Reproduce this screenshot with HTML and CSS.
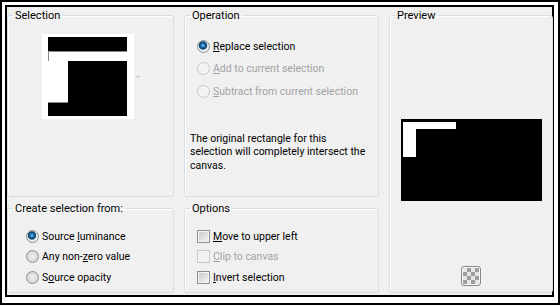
FILE: index.html
```html
<!DOCTYPE html>
<html lang="en">
    <head>
        <meta charset="UTF-8">
        <meta name="viewport" content="width=device-width, initial-scale=1.0">
        <title>Selection From Mask</title>
        <link rel="stylesheet" href="styles.css">
    </head>
    <body>
        <div class="frame">
            <div class="dialog">
                <fieldset class="group selection">
                    <legend>Selection</legend>
                    <div class="thumb-row">
                        <svg class="thumb" width="92" height="85" viewBox="0 0 92 85">
                            <rect x="0" y="0" width="92" height="85" fill="#fff"/>
                            <rect x="6" y="3" width="79" height="79" fill="#000"/>
                            <rect x="6" y="17" width="79" height="10" fill="#fff"/>
                            <rect x="6" y="27" width="20" height="42" fill="#fff"/>
                            <path d="M6.5 27V17.5H85" stroke="#8a8a8a" fill="none"/>
                            <path d="M6 68.5H26" stroke="#8a8a8a"/>
                        </svg>
                        <span class="drop"></span>
                    </div>
                </fieldset>

                <fieldset class="group operation">
                    <legend>Operation</legend>
                    <label class="opt"><span class="radio on"></span><span><u>R</u>eplace selection</span></label>
                    <label class="opt off"><span class="radio"></span><span><u>A</u>dd to current selection</span></label>
                    <label class="opt off"><span class="radio"></span><span><u>S</u>ubtract from current selection</span></label>
                    <p class="note">The original rectangle for this selection will completely intersect the canvas.</p>
                </fieldset>

                <fieldset class="group preview">
                    <legend>Preview</legend>
                    <svg class="preview-img" width="141" height="82" viewBox="0 0 141 82">
                        <rect x="0" y="0" width="141" height="82" fill="#000"/>
                        <rect x="2" y="3" width="53" height="7" fill="#fff"/>
                        <rect x="2" y="3" width="13" height="35" fill="#fff"/>
                    </svg>
                    <button class="checker" title="Transparency"></button>
                </fieldset>

                <fieldset class="group source">
                    <legend>Create selection from:</legend>
                    <label class="opt"><span class="radio on"></span><span>Source <u>l</u>uminance</span></label>
                    <label class="opt"><span class="radio"></span><span>Any non-<u>z</u>ero value</span></label>
                    <label class="opt"><span class="radio"></span><span>S<u>o</u>urce opacity</span></label>
                </fieldset>

                <fieldset class="group options">
                    <legend>Options</legend>
                    <label class="opt"><span class="check"></span><span><u>M</u>ove to upper left</span></label>
                    <label class="opt off"><span class="check"></span><span><u>C</u>lip to canvas</span></label>
                    <label class="opt"><span class="check"></span><span><u>I</u>nvert selection</span></label>
                </fieldset>
            </div>
        </div>
    </body>
</html>
```

FILE: styles.css
```css
body {
    margin: 0;
    background-color: #fff;
    font-family: "Segoe UI", Roboto, sans-serif;
    font-size: 10.5px;
    color: #000;
}
.frame {
    width: 560px;
    height: 305px;
    box-sizing: border-box;
    border: 2px solid #000;
    padding: 3px 4px 6px 3px;
}
.dialog {
    height: 100%;
    box-sizing: border-box;
    border: 2px solid #000;
    background-color: #f0f0f0;
    padding: 1px 0 0 0;
    display: grid;
    grid-template-columns: 167px 195px 164px;
    grid-template-rows: 189px 92px;
    column-gap: 10px;
    row-gap: 4px;
}
.group {
    margin: 0;
    padding: 0;
    min-width: 0;
    border: 1px solid #d5dfe5;
    border-radius: 3px;
    box-shadow: inset 1px 1px 0 #fff;
}
.group legend {
    margin-left: 5px;
    padding: 0 2px;
    line-height: 15px;
    font-size: 11px;
}
.preview {
    grid-column: 3;
    grid-row: 1 / span 2;
}
.selection {
    grid-column: 1;
    grid-row: 1;
}
.operation {
    grid-column: 2;
    grid-row: 1;
    padding-top: 12px;
}
.source {
    grid-column: 1;
    grid-row: 2;
    padding-top: 10px;
}
.options {
    grid-column: 2;
    grid-row: 2;
    padding-top: 10px;
}
.opt {
    display: flex;
    align-items: center;
    height: 20.5px;
    gap: 3px;
}
.operation .opt {
    height: 22.5px;
    margin-left: 12px;
}
.source .opt {
    margin-left: 18px;
}
.options .opt {
    margin-left: 12px;
}
.opt.off {
    color: #a3a3a3;
}
.opt u {
    text-underline-offset: 1px;
}
.radio {
    width: 13px;
    height: 13px;
    box-sizing: border-box;
    border-radius: 50%;
    border: 1px solid #8e8f8f;
    background: radial-gradient(circle at 50% 50%, #f2f2f2 0, #e2e2e2 3px, #d4d4d4 6px);
    flex: none;
}
.radio.on {
    background: radial-gradient(circle at 45% 40%, #8fd0f5 0, #2a7fbf 1.5px, #0d3f66 3.5px, #3a6f95 4px, #dde8f0 4.6px, #ececec 6px);
}
.opt.off .radio {
    border-color: #c9c9c9;
    background: #f2f2f2;
}
.check {
    width: 13px;
    height: 13px;
    box-sizing: border-box;
    border: 1px solid #8e8f8f;
    box-shadow: inset 0 0 0 1px #f4f4f4;
    background: linear-gradient(135deg, #c8c8c8, #f4f4f4);
    flex: none;
}
.opt.off .check {
    border-color: #c9c9c9;
    background: #f2f2f2;
    box-shadow: none;
}
.note {
    width: 180px;
    margin: 29px 0 0 5px;
    line-height: 13.5px;
}
.thumb-row {
    display: flex;
    align-items: center;
    gap: 2px;
    margin: 11px 0 0 34px;
}
.thumb {
    display: block;
}
.drop {
    width: 0;
    height: 0;
    border-left: 2px solid transparent;
    border-right: 2px solid transparent;
    border-top: 2px solid #c4c4c4;
}
.preview-img {
    display: block;
    margin: 96px 0 0 11px;
}
.checker {
    display: block;
    width: 20px;
    height: 20px;
    margin: 65px 0 0 71px;
    padding: 0;
    box-sizing: border-box;
    border: 1px solid #8a8a8a;
    border-radius: 3px;
    background-color: #e6e6e6;
    background-image:
        linear-gradient(45deg, #9e9e9e 25%, transparent 25%, transparent 75%, #9e9e9e 75%),
        linear-gradient(45deg, #9e9e9e 25%, transparent 25%, transparent 75%, #9e9e9e 75%);
    background-size: 8px 8px;
    background-position: 1px 1px, 5px 5px;
    box-shadow: inset 0 0 0 1px #f8f8f8;
}
```
